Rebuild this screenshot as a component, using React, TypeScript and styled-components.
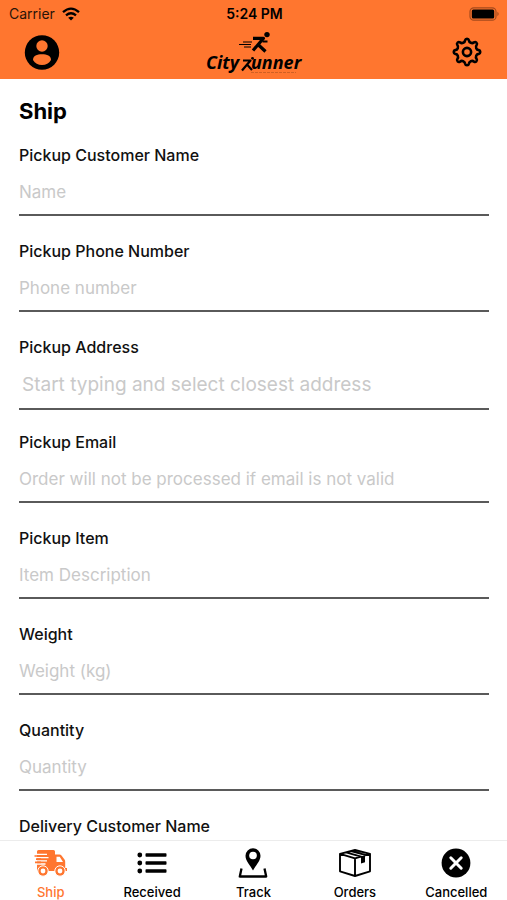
import React from "react";
import styled, { createGlobalStyle } from "styled-components";

const GlobalStyle = createGlobalStyle`
  * { box-sizing: border-box; }
  body { margin: 0; background: #fff; color: #111; font-family: Inter, "Liberation Sans", sans-serif; }
`;

const Screen = styled.div`
  height: 100vh;
  display: flex;
  flex-direction: column;
`;

const Header = styled.header`
  flex: none;
  background: #ff762f;
  color: #000;
`;

const StatusBar = styled.div`
  display: grid;
  grid-template-columns: 1fr auto 1fr;
  align-items: center;
  height: 27px;
  padding: 0 7px 0 9px;
  font-size: 14px;
  line-height: 20px;
`;

const Carrier = styled.div`
  display: flex;
  align-items: center;
  gap: 7px;
  color: #2a1408;
`;

const Clock = styled.div`
  font-weight: 600;
`;

const Battery = styled.div`
  display: flex;
  justify-content: flex-end;
`;

const AppBar = styled.div`
  display: grid;
  grid-template-columns: 1fr auto 1fr;
  align-items: center;
  height: 52px;
  padding: 0 24px 2px;
`;

const IconButton = styled.button<{ $end?: boolean }>`
  display: flex;
  justify-self: ${(p) => (p.$end ? "end" : "start")};
  padding: 0;
  border: 0;
  background: none;
  color: #000;
  cursor: pointer;
`;

const Content = styled.main`
  flex: 1;
  min-height: 0;
  overflow: hidden;
  padding: 18px 18px 0 19px;
`;

const Title = styled.h1`
  margin: 0 0 20px;
  font-size: 22px;
  line-height: 28px;
  font-weight: 700;
  color: #000;
`;

const Field = styled.div<{ $large?: boolean }>`
  display: flex;
  flex-direction: column;
  gap: 4px;
  margin-bottom: ${(p) => (p.$large ? 22 : 25)}px;
`;

const Label = styled.label`
  font-size: 16px;
  line-height: 20px;
  font-weight: 500;
`;

const TextInput = styled.input<{ $large?: boolean }>`
  width: 100%;
  height: ${(p) => (p.$large ? 49 : 47)}px;
  padding: 0 ${(p) => (p.$large ? 3 : 0)}px;
  border: 0;
  border-bottom: 2px solid #5a5a5a;
  border-radius: 0;
  outline: 0;
  background: none;
  color: #111;
  font-family: inherit;
  font-size: ${(p) => (p.$large ? 19 : 17)}px;
  &::placeholder { color: #c9c9c9; opacity: 1; }
`;

const TabBar = styled.nav`
  flex: none;
  display: grid;
  grid-template-columns: repeat(5, 1fr);
  height: 60px;
  border-top: 1px solid #ececec;
  background: #fff;
`;

const Tab = styled.button<{ $active?: boolean }>`
  display: flex;
  flex-direction: column;
  align-items: center;
  gap: 5px;
  padding: 5px 0 0;
  border: 0;
  background: none;
  color: ${(p) => (p.$active ? "#ff762f" : "#000")};
  font-family: inherit;
  font-size: 13px;
  line-height: 16px;
  font-weight: 500;
  cursor: pointer;
`;

const TabIcon = styled.span`
  display: flex;
  align-items: center;
  justify-content: center;
  height: 33px;
`;

const LogoSvg = styled.svg`
  display: block;
  font-family: "Open Sans", sans-serif;
  font-size: 18px;
  font-weight: 700;
  font-style: italic;
`;

const WifiIcon = () => (
  <svg width="18" height="14" viewBox="0 0 18 14" fill="none" stroke="#000" strokeWidth="2.3" aria-label="Wi-Fi">
    <path d="M1 5.2Q9-2 17 5.2M4 8.4q5-4.2 10 0" />
    <path d="M9 13.6 6.2 10.8q2.8-2.2 5.6 0z" fill="#000" stroke="none" />
  </svg>
);

const BatteryIcon = () => (
  <svg width="31" height="14" viewBox="0 0 31 14" aria-label="Battery full">
    <rect x="1" y=".8" width="26" height="12.4" rx="3.8" fill="none" stroke="#a54a1d" strokeWidth="1.2" />
    <rect x="2.8" y="2.4" width="22.4" height="9.2" rx="1.5" fill="#000" />
    <path d="M28.4 4.8q2.6 2.2 0 4.4z" fill="#a54a1d" />
  </svg>
);

const AccountIcon = () => (
  <svg width="36" height="36" viewBox="0 0 36 36">
    <circle cx="18" cy="18.5" r="17.2" fill="#000" />
    <circle cx="18" cy="12" r="5.7" fill="#ff762f" />
    <path d="M9 25.9c0-4.2 4-5.6 9-5.6s9 1.4 9 5.6c-2 3.2-5 5-9 5s-7-1.8-9-5z" fill="#ff762f" />
  </svg>
);

const polar = (radius: number, degrees: number) => {
  const a = (degrees * Math.PI) / 180;
  return `${(16 + radius * Math.sin(a)).toFixed(2)} ${(16 - radius * Math.cos(a)).toFixed(2)}`;
};

const gearOutline =
  `M${polar(11.9, -9)}` +
  Array.from({ length: 8 }, (_, i) => `A1.9 1.9 0 0 1 ${polar(11.9, i * 45 + 9)}A3.2 3.2 0 0 0 ${polar(11.9, i * 45 + 36)}`).join("") +
  "Z";

const GearIcon = () => (
  <svg width="32" height="32" viewBox="0 0 32 32" fill="none" stroke="currentColor" strokeWidth="2.6" strokeLinejoin="round">
    <path d={gearOutline} />
    <circle cx="16" cy="16" r="4.1" />
  </svg>
);

const Logo = () => (
  <LogoSvg width="98" height="44" viewBox="0 0 98 44" role="img" aria-label="CityRunner">
    <circle cx="62" cy="4.6" r="2.7" fill="#000" />
    <g fill="none" stroke="#000">
      <path d="M48 8.300H58.500L48 20.500M53 14.500l7.500 7" strokeWidth="3.200" strokeLinejoin="round" />
      <path d="M57.500 11.500h5" strokeWidth="2" />
      <path d="M38 12h9M34 14.500h12M39 17h7" strokeWidth="1.200" />
      <path d="M38 30.500h7.500l-8.500 10M42 34.500l5 5.500" strokeWidth="2.200" strokeLinejoin="round" />
      <path d="M46 42.500h45" stroke="#c45a22" strokeWidth=".8" strokeDasharray="3 1" />
    </g>
    <circle cx="47.5" cy="28.3" r="1.4" fill="#000" />
    <text x="1" y="39">City</text>
    <text x="46" y="39">unner</text>
  </LogoSvg>
);

const TruckIcon = () => (
  <svg width="34" height="28" viewBox="0 0 34 28">
    <path
      d="M5.500 1h14a1.500 1.500 0 0 1 1.500 1.500v3h4.500q1.200 0 2 .9l3 4.200q.7 1 .7 2.100v6.300h1.800v3H4.500a1.500 1.500 0 0 1-1.500-1.500V2.500a1.500 1.500 0 0 1 1.500-1.500z"
      fill="currentColor"
    />
    <path d="M22.500 7.800h3.200l3.300 5.200h-6.500z" fill="#fff" />
    <path d="M2 5.400h11M2 8.600h12.500M2 11.800h11M2 15h9.500" stroke="#fff" strokeWidth="1.3" />
    <path d="M.5 7h6M2 10.200h5M1 13.400h6" stroke="currentColor" strokeWidth="1.700" />
    <g fill="currentColor" stroke="#fff" strokeWidth="1">
      <circle cx="9" cy="22" r="5.200" />
      <circle cx="26" cy="22" r="5.200" />
    </g>
    <g fill="#fff">
      <circle cx="9" cy="22" r="2.400" />
      <circle cx="26" cy="22" r="2.400" />
    </g>
  </svg>
);

const ListIcon = () => (
  <svg width="30" height="24" viewBox="0 0 30 24" fill="currentColor">
    {[4, 12, 20].map((y) => (
      <g key={y}>
        <circle cx="2.8" cy={y} r="2.4" />
        <rect x="8.5" y={y - 1.8} width="21" height="3.6" rx=".8" />
      </g>
    ))}
  </svg>
);

const TrackIcon = () => (
  <svg width="30" height="32" viewBox="0 0 30 32">
    <path d="M15 23.500C12 18 7.500 14 7.500 8.800a7.500 7.500 0 0 1 15 0C22.500 14 18 18 15 23.500z" fill="currentColor" />
    <circle cx="15" cy="8.5" r="3.8" fill="#fff" />
    <path d="M3.500 21.500 1.800 29.500h26.400l-1.700-8" fill="none" stroke="currentColor" strokeWidth="2.3" strokeLinejoin="round" />
  </svg>
);

const BoxIcon = () => (
  <svg width="32" height="28" viewBox="0 0 32 28" fill="none" stroke="currentColor" strokeWidth="1.9" strokeLinejoin="round">
    <path d="M1 4.800 16 1l15 3.800v17.500L16 27 1 22.300zM1 4.800l15 4.500 15-4.500M16 9.300V27M7 3.300l16 4.500M12 2l15 4.200" />
    <path d="M22 7.500v7l4-1.300V6.300z" fill="currentColor" stroke="none" />
  </svg>
);

const CancelIcon = () => (
  <svg width="30" height="30" viewBox="0 0 30 30">
    <circle cx="15" cy="15" r="14.4" fill="currentColor" />
    <path d="m9.800 9.800 10.400 10.400m0-10.400L9.800 20.200" stroke="#fff" strokeWidth="3" strokeLinecap="round" />
  </svg>
);

const fields = [
  { id: "name", label: "Pickup Customer Name", hint: "Name" },
  { id: "phone", label: "Pickup Phone Number", hint: "Phone number" },
  { id: "address", label: "Pickup Address", hint: "Start typing and select closest address", large: true },
  { id: "email", label: "Pickup Email", hint: "Order will not be processed if email is not valid" },
  { id: "item", label: "Pickup Item", hint: "Item Description" },
  { id: "weight", label: "Weight", hint: "Weight (kg)" },
  { id: "quantity", label: "Quantity", hint: "Quantity" },
  { id: "delivery", label: "Delivery Customer Name", hint: "Name" },
];

const tabs = [
  { label: "Ship", icon: <TruckIcon />, active: true },
  { label: "Received", icon: <ListIcon /> },
  { label: "Track", icon: <TrackIcon /> },
  { label: "Orders", icon: <BoxIcon /> },
  { label: "Cancelled", icon: <CancelIcon /> },
];

export default function App() {
  return (
    <Screen>
      <GlobalStyle />
      <Header>
        <StatusBar>
          <Carrier>Carrier <WifiIcon /></Carrier>
          <Clock>5:24 PM</Clock>
          <Battery><BatteryIcon /></Battery>
        </StatusBar>
        <AppBar>
          <IconButton aria-label="Account"><AccountIcon /></IconButton>
          <Logo />
          <IconButton $end aria-label="Settings"><GearIcon /></IconButton>
        </AppBar>
      </Header>
      <Content>
        <Title>Ship</Title>
        {fields.map((f) => (
          <Field key={f.id} $large={f.large}>
            <Label htmlFor={f.id}>{f.label}</Label>
            <TextInput id={f.id} placeholder={f.hint} $large={f.large} />
          </Field>
        ))}
      </Content>
      <TabBar>
        {tabs.map((t) => (
          <Tab key={t.label} $active={t.active}>
            <TabIcon>{t.icon}</TabIcon>
            {t.label}
          </Tab>
        ))}
      </TabBar>
    </Screen>
  );
}
